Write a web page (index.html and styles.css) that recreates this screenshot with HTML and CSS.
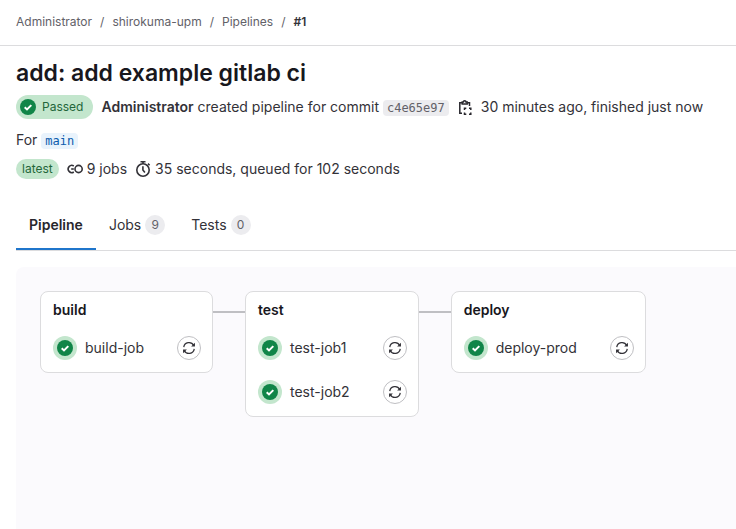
FILE: index.html
```html
<!DOCTYPE html>
<html lang="en">
<head>
    <meta charset="UTF-8">
    <meta name="viewport" content="width=device-width, initial-scale=1.0">
    <title>add: add example gitlab ci</title>
    <link rel="stylesheet" href="styles.css">
</head>
<body>

    <!-- Shared icons -->
    <svg class="sprite" aria-hidden="true">
        <symbol id="icon-passed" viewBox="0 0 16 16">
            <circle cx="8" cy="8" r="8" fill="#108548"/>
            <path d="M4.7 8.2l2.3 2.2 4.3-4.3" fill="none" stroke="#fff" stroke-width="2"/>
        </symbol>
        <symbol id="icon-retry" viewBox="0 0 16 16">
            <path d="M2 7a6.1 6.1 0 0 1 11.4-2M14 9a6.1 6.1 0 0 1-11.4 2" fill="none" stroke="currentColor" stroke-width="1.4"/>
            <path d="M14.8 2v4.4h-4.4zM1.2 14V9.6h4.4z" fill="currentColor"/>
        </symbol>
    </svg>

    <header class="top-bar">
        <nav aria-label="Breadcrumb">
            <ol class="breadcrumbs">
                <li><a href="#">Administrator</a></li>
                <li><a href="#">shirokuma-upm</a></li>
                <li><a href="#">Pipelines</a></li>
                <li><a href="#" class="current" aria-current="page">#1</a></li>
            </ol>
        </nav>
    </header>

    <main class="content">
        <h1>add: add example gitlab ci</h1>

        <div class="info-row">
            <a href="#" class="status-badge">
                <svg class="icon"><use href="#icon-passed"/></svg>
                Passed
            </a>
            <span><a href="#" class="author">Administrator</a> created pipeline for commit <a href="#" class="commit">c4e65e97</a></span>
            <button class="copy-button" aria-label="Copy commit SHA">
                <svg class="icon" viewBox="0 0 16 16" fill="none" stroke="currentColor" stroke-width="1.5">
                    <path d="M5 14.2H2.8V3.8H5M10.5 3.8h2V7"/>
                    <path d="M5.2 5V3h1.2a1.3 1.3 0 0 1 2.6 0h1.2v2z"/>
                    <path d="M7.5 11V9.2h1.8M12 9.2h1.8V11M13.8 13.5v1.8H12M9.3 15.3H7.5v-1.8"/>
                </svg>
            </button>
            <span>30 minutes ago, finished just now</span>
        </div>

        <div class="info-row branch-row">
            <span>For <a href="#" class="branch">main</a></span>
        </div>

        <div class="info-row">
            <span class="tag">latest</span>
            <span class="stat">
                <svg class="icon" viewBox="0 0 16 16" fill="none" stroke="currentColor" stroke-width="1.6">
                    <path d="M6.8 5A3.6 3.6 0 1 0 6.8 11"/>
                    <circle cx="11.6" cy="8" r="3.6"/>
                    <path d="M4.2 8h2.6"/>
                </svg>
                9 jobs
            </span>
            <span class="stat">
                <svg class="icon" viewBox="0 0 16 16" fill="none" stroke="currentColor" stroke-width="1.6">
                    <circle cx="8" cy="9" r="6.2"/>
                    <path d="M5.5.8h5M8 .8v2M13 2.6l1.6 1.6M7.9 5.2V9l2 2.4"/>
                </svg>
                35 seconds, queued for 102 seconds
            </span>
        </div>

        <div class="tabs" role="tablist">
            <button class="tab active" role="tab" aria-selected="true">Pipeline</button>
            <button class="tab" role="tab" aria-selected="false">Jobs <span class="count">9</span></button>
            <button class="tab" role="tab" aria-selected="false">Tests <span class="count">0</span></button>
        </div>

        <div class="graph">
            <section class="stage">
                <h2>build</h2>
                <div class="job">
                    <a href="#"><span class="job-status"><svg class="icon"><use href="#icon-passed"/></svg></span>build-job</a>
                    <button class="retry" aria-label="Run build-job again"><svg><use href="#icon-retry"/></svg></button>
                </div>
            </section>
            <div class="connector"></div>
            <section class="stage">
                <h2>test</h2>
                <div class="job">
                    <a href="#"><span class="job-status"><svg class="icon"><use href="#icon-passed"/></svg></span>test-job1</a>
                    <button class="retry" aria-label="Run test-job1 again"><svg><use href="#icon-retry"/></svg></button>
                </div>
                <div class="job">
                    <a href="#"><span class="job-status"><svg class="icon"><use href="#icon-passed"/></svg></span>test-job2</a>
                    <button class="retry" aria-label="Run test-job2 again"><svg><use href="#icon-retry"/></svg></button>
                </div>
            </section>
            <div class="connector"></div>
            <section class="stage">
                <h2>deploy</h2>
                <div class="job">
                    <a href="#"><span class="job-status"><svg class="icon"><use href="#icon-passed"/></svg></span>deploy-prod</a>
                    <button class="retry" aria-label="Run deploy-prod again"><svg><use href="#icon-retry"/></svg></button>
                </div>
            </section>
        </div>
    </main>

</body>
</html>
```
FILE: styles.css
```css
* {
    box-sizing: border-box;
}
body {
    display: flex;
    flex-direction: column;
    min-height: 100vh;
    margin: 0;
    background-color: #fff;
    color: #333238;
    font-family: Inter, "Noto Sans", sans-serif;
    font-size: 14px;
    line-height: 20px;
}
a {
    color: inherit;
    text-decoration: none;
}
button {
    padding: 0;
    border: none;
    background: none;
    color: inherit;
    font: inherit;
    cursor: pointer;
}
.sprite {
    display: none;
}
.icon {
    display: block;
    flex: none;
    width: 16px;
    height: 16px;
}
.top-bar {
    padding: 12px 16px 13px;
    border-bottom: 1px solid #dcdcde;
}
.breadcrumbs {
    display: flex;
    margin: 0;
    padding: 0;
    list-style: none;
    color: #626168;
    font-size: 12px;
}
.breadcrumbs li + li::before {
    content: "/";
    margin: 0 8px;
}
.breadcrumbs .current {
    color: #333238;
    font-weight: 600;
}
.content {
    display: flex;
    flex: 1;
    flex-direction: column;
    padding-left: 16px;
}
h1 {
    margin: 13px 0 7px;
    color: #18171d;
    font-size: 23px;
    font-weight: 600;
    line-height: 29px;
}
.info-row {
    display: flex;
    align-items: center;
    gap: 8px;
    min-height: 24px;
}
.branch-row {
    margin: 9px 0 5px;
}
.status-badge {
    display: flex;
    align-items: center;
    gap: 6px;
    height: 24px;
    padding: 0 10px 0 4px;
    border-radius: 12px;
    background-color: #c3e6cd;
    color: #24663b;
    font-size: 12px;
}
.author {
    font-weight: 600;
}
.commit, .branch {
    padding: 1px 4px;
    border-radius: 4px;
    font-family: "DejaVu Sans Mono", monospace;
    font-size: 12px;
}
.commit {
    background-color: #ececef;
    color: #626168;
}
.branch {
    background-color: #e9f3fc;
    color: #0b5cad;
}
.copy-button {
    color: #28272d;
}
.tag {
    padding: 0 6px;
    border-radius: 10px;
    background-color: #c3e6cd;
    color: #24663b;
    font-size: 12px;
}
.stat {
    display: flex;
    align-items: center;
    gap: 4px;
}
.tabs {
    display: flex;
    margin-top: 19px;
    border-bottom: 1px solid #dcdcde;
}
.tab {
    display: flex;
    align-items: center;
    gap: 4px;
    height: 50px;
    padding: 0 13px;
}
.tab.active {
    box-shadow: inset 0 -2px 0 #1f75cb;
    color: #28272d;
    font-weight: 600;
}
.count {
    min-width: 20px;
    border-radius: 10px;
    background-color: #ececef;
    color: #626168;
    font-size: 12px;
    text-align: center;
}
.graph {
    display: flex;
    flex: 1;
    align-items: flex-start;
    margin-top: 16px;
    padding: 24px;
    border-radius: 8px 0 0 0;
    background-color: #fbfafd;
}
.stage {
    padding: 8px 11px 2px 12px;
    border: 1px solid #dcdcde;
    border-radius: 8px;
    background-color: #fff;
}
.stage h2 {
    margin: 0 0 6px;
    color: #18171d;
    font-size: 14px;
    font-weight: 600;
    line-height: 20px;
}
.job {
    display: flex;
    align-items: center;
    justify-content: space-between;
    gap: 33px;
    height: 44px;
}
.job a {
    display: flex;
    align-items: center;
    gap: 8px;
}
.job-status {
    padding: 4px;
    border-radius: 50%;
    background-color: #c3e6cd;
}
.retry {
    display: flex;
    align-items: center;
    justify-content: center;
    width: 24px;
    height: 24px;
    border: 1px solid #bfbfc3;
    border-radius: 50%;
    background-color: #fff;
}
.retry svg {
    flex: none;
    width: 14px;
    height: 14px;
}
.connector {
    flex: none;
    width: 32px;
    height: 2px;
    margin-top: 20px;
    background-color: #bfbfc3;
}
```
